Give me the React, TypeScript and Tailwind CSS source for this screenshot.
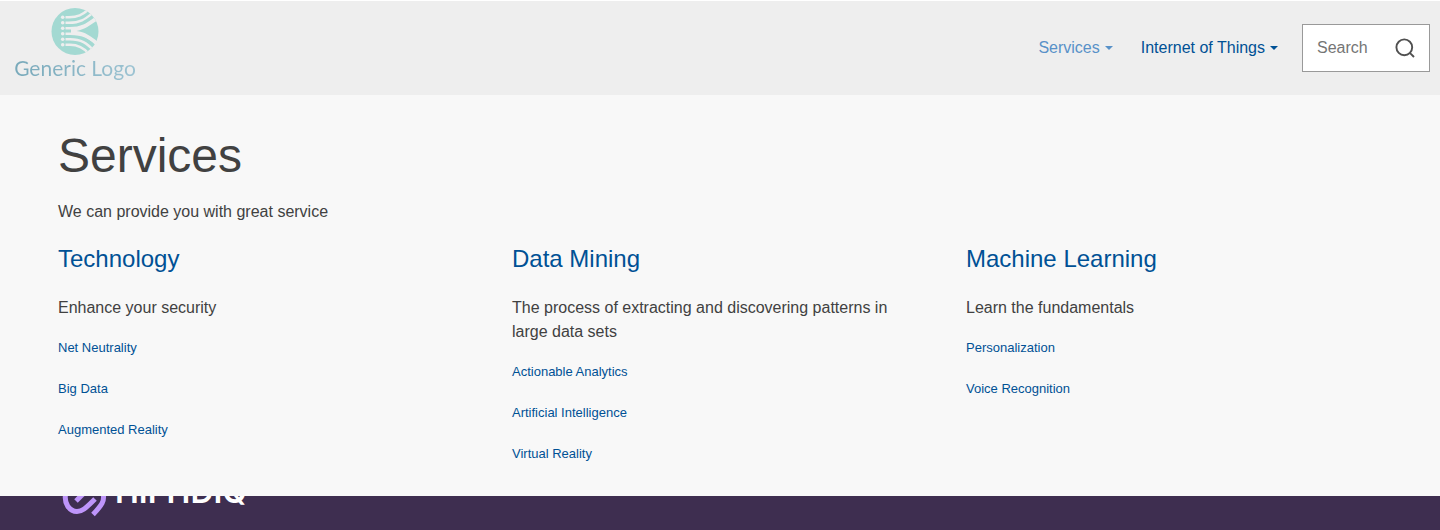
import React from "react";

type Column = { title: string; text: string; links: string[] };

const columns: Column[] = [
  { title: "Technology", text: "Enhance your security", links: ["Net Neutrality", "Big Data", "Augmented Reality"] },
  {
    title: "Data Mining",
    text: "The process of extracting and discovering patterns in large data sets",
    links: ["Actionable Analytics", "Artificial Intelligence", "Virtual Reality"],
  },
  { title: "Machine Learning", text: "Learn the fundamentals", links: ["Personalization", "Voice Recognition"] },
];

function Logo() {
  return (
    <a href="#" className="flex w-[120px] flex-col items-center">
      <svg width="48" height="48" viewBox="0 0 48 48" aria-hidden="true">
        <defs>
          <clipPath id="disc">
            <circle cx="24" cy="23.5" r="23.5" />
          </clipPath>
        </defs>
        <circle cx="24" cy="23.5" r="23.5" fill="#a3d9d2" />
        <g clipPath="url(#disc)" fill="none" stroke="#eeeeee" strokeWidth="2.4">
          <path d="M14.5 9.3H18C27 9.3 31 7 37.5 1.5" />
          <path d="M14.5 14.8H18C30 14.8 34 11 43 4" />
          <path d="M14.5 20.3H19C32 20.3 37 15.5 48 7.5" />
          <path d="M14.5 25.8H19C32 25.8 39 29 48 39" />
          <path d="M14.5 31.3H19C30 31.3 36 35 43 43" />
          <path d="M14.5 36.8H19C28 36.8 33 40 38 46" />
        </g>
        <path d="M20 19.5C32 19.5 37 14.5 43 11L45.5 13C39 17 34 21.5 25.5 23C34 24 40 28 47 34L45 37C36 28.5 29 26.5 20 26.5Z" fill="#eeeeee" />
        <g fill="#eeeeee">
          <circle cx="11.7" cy="9.3" r="1.8" />
          <circle cx="11.7" cy="14.8" r="1.8" />
          <circle cx="11.7" cy="20.3" r="1.8" />
          <circle cx="11.7" cy="25.8" r="1.8" />
          <circle cx="11.7" cy="31.3" r="1.8" />
          <circle cx="11.7" cy="36.8" r="1.8" />
        </g>
      </svg>
      <span className="bg-linear-to-r from-[#78a9ba] to-[#9cc3d2] bg-clip-text font-['Lato',sans-serif] text-[21px] leading-6 whitespace-nowrap text-transparent">
        Generic Logo
      </span>
    </a>
  );
}

function Caret() {
  return (
    <svg width="8" height="4" viewBox="0 0 8 4" fill="currentColor" aria-hidden="true">
      <path d="M0 0H8L4 4Z" />
    </svg>
  );
}

export default function App() {
  return (
    <div className="bg-[#f8f8f8] font-['Liberation_Sans',Arial,sans-serif] text-[#414141]">
      <header className="mt-px flex items-center justify-between bg-[#eeeeee] pr-[10px] pl-[15px]">
        <div className="pt-[7px] pb-[15px]">
          <Logo />
        </div>
        <div className="flex items-center gap-6">
          <nav className="flex items-center gap-7">
            <button className="flex items-center gap-[5px] text-[#5891c8]">
              Services <Caret />
            </button>
            <button className="flex items-center gap-[5px] text-[#005195]">
              Internet of Things <Caret />
            </button>
          </nav>
          <form role="search" className="flex h-12 w-32 items-center justify-between border border-[#999999] bg-white px-[14px]">
            <input type="search" aria-label="Search" placeholder="Search" className="w-[72px] min-w-0 bg-transparent outline-none placeholder:text-[#757575]" />
            <button type="button" aria-label="Submit search" className="text-[#505050]">
              <svg width="20" height="20" viewBox="0 0 20 20" fill="none" stroke="currentColor" strokeWidth="1.9" aria-hidden="true">
                <circle cx="9.3" cy="9.3" r="7.9" />
                <path d="M14.8 14.8L19 19" />
              </svg>
            </button>
          </form>
        </div>
      </header>
      <main className="px-[58px] pt-8 pb-[30px]">
        <h1 className="text-5xl leading-[58px]">Services</h1>
        <p className="mt-[15px] leading-6">We can provide you with great service</p>
        <div className="mt-5 grid grid-cols-3 gap-x-[38px]">
          {columns.map((c) => (
            <section key={c.title}>
              <h2 className="text-2xl leading-[30px]">
                <a href="#" className="text-[#005195]">{c.title}</a>
              </h2>
              <p className="mt-[22px] max-w-96 leading-6">{c.text}</p>
              <ul className="mt-4 flex flex-col gap-[17px]">
                {c.links.map((l) => (
                  <li key={l}>
                    <a href="#" className="block text-[13px] leading-6 text-[#005195]">{l}</a>
                  </li>
                ))}
              </ul>
            </section>
          ))}
        </div>
      </main>
      <footer className="flex h-[34px] items-start overflow-hidden bg-[#3e2e50] pl-[62px]">
        <svg width="46" height="22" viewBox="0 0 46 22" fill="none" stroke="#be95fa" strokeWidth="5" aria-hidden="true">
          <path d="M4 -4C1 8 8 15.5 15 15.5C20 15.5 23 13 33 3" />
          <path d="M14 5L22 -3" />
          <path d="M41 -3C43 5 40 9 31 18.5" />
        </svg>
        <span className="-mt-[22px] ml-[7px] font-['Inter',sans-serif] text-[32px] leading-9 font-semibold whitespace-nowrap text-white">HIFHDIQ</span>
      </footer>
    </div>
  );
}
